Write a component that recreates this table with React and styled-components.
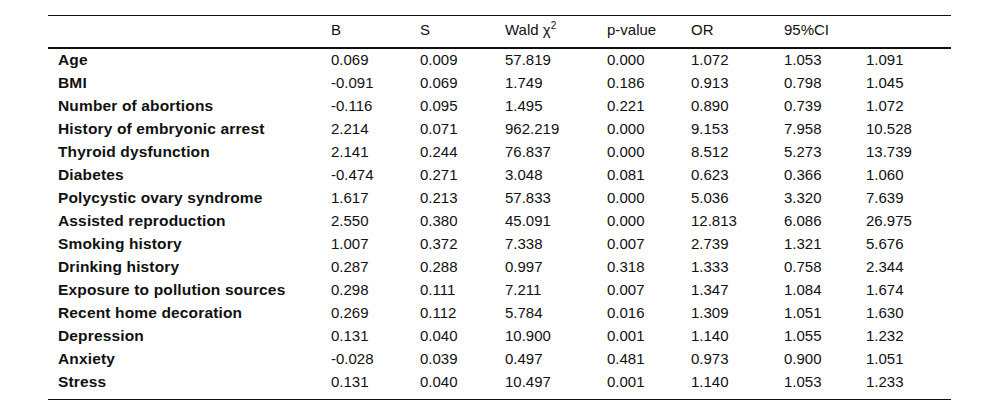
import React from "react";
import styled, { createGlobalStyle } from "styled-components";

const GlobalStyle = createGlobalStyle`
  body {
    margin: 0;
    background: #fff;
    font-family: "Liberation Sans", Arial, sans-serif;
    color: #111;
  }
`;

const Wrapper = styled.div`
  padding: 15px 0 0 48px;
`;

const Table = styled.table`
  width: 903px;
  border-collapse: collapse;
  font-size: 15px;
  table-layout: fixed;
  border-top: 1px solid #111;
  border-bottom: 1px solid #111;
`;

const HeadCell = styled.th`
  font-weight: 400;
  text-align: left;
  line-height: 18px;
  padding: 5px 0 8px 10px;
  vertical-align: middle;
  border-bottom: 2px solid #111;
`;

const Row = styled.tr`
  &:last-child td {
    padding-bottom: 8px;
  }
`;

const Cell = styled.td`
  padding: 2px 0 3px 10px;
  font-weight: ${(p) => (p.$bold ? 700 : 400)};
  font-size: ${(p) => (p.$bold ? "15.5px" : "15px")};
  letter-spacing: ${(p) => (p.$bold ? "0.15px" : "0")};
  line-height: 18px;
  vertical-align: middle;
  white-space: nowrap;
`;

const Sup = styled.sup`
  font-size: 10px;
  line-height: 0;
`;

const widths = [273, 89, 85, 102, 84, 93, 82, 95];

const rows = [
  ["Age", "0.069", "0.009", "57.819", "0.000", "1.072", "1.053", "1.091"],
  ["BMI", "-0.091", "0.069", "1.749", "0.186", "0.913", "0.798", "1.045"],
  ["Number of abortions", "-0.116", "0.095", "1.495", "0.221", "0.890", "0.739", "1.072"],
  ["History of embryonic arrest", "2.214", "0.071", "962.219", "0.000", "9.153", "7.958", "10.528"],
  ["Thyroid dysfunction", "2.141", "0.244", "76.837", "0.000", "8.512", "5.273", "13.739"],
  ["Diabetes", "-0.474", "0.271", "3.048", "0.081", "0.623", "0.366", "1.060"],
  ["Polycystic ovary syndrome", "1.617", "0.213", "57.833", "0.000", "5.036", "3.320", "7.639"],
  ["Assisted reproduction", "2.550", "0.380", "45.091", "0.000", "12.813", "6.086", "26.975"],
  ["Smoking history", "1.007", "0.372", "7.338", "0.007", "2.739", "1.321", "5.676"],
  ["Drinking history", "0.287", "0.288", "0.997", "0.318", "1.333", "0.758", "2.344"],
  ["Exposure to pollution sources", "0.298", "0.111", "7.211", "0.007", "1.347", "1.084", "1.674"],
  ["Recent home decoration", "0.269", "0.112", "5.784", "0.016", "1.309", "1.051", "1.630"],
  ["Depression", "0.131", "0.040", "10.900", "0.001", "1.140", "1.055", "1.232"],
  ["Anxiety", "-0.028", "0.039", "0.497", "0.481", "0.973", "0.900", "1.051"],
  ["Stress", "0.131", "0.040", "10.497", "0.001", "1.140", "1.053", "1.233"],
];

export default function App() {
  return (
    <>
      <GlobalStyle />
      <Wrapper>
        <Table>
          <colgroup>
            {widths.map((w, i) => (
              <col key={i} style={{ width: w }} />
            ))}
          </colgroup>
          <thead>
            <tr>
              <HeadCell />
              <HeadCell>B</HeadCell>
              <HeadCell>S</HeadCell>
              <HeadCell>
                Wald χ<Sup>2</Sup>
              </HeadCell>
              <HeadCell>p-value</HeadCell>
              <HeadCell>OR</HeadCell>
              <HeadCell>95%CI</HeadCell>
              <HeadCell />
            </tr>
          </thead>
          <tbody>
            {rows.map((r) => (
              <Row key={r[0]}>
                {r.map((v, i) => (
                  <Cell key={i} $bold={i === 0}>
                    {v}
                  </Cell>
                ))}
              </Row>
            ))}
          </tbody>
        </Table>
      </Wrapper>
    </>
  );
}
